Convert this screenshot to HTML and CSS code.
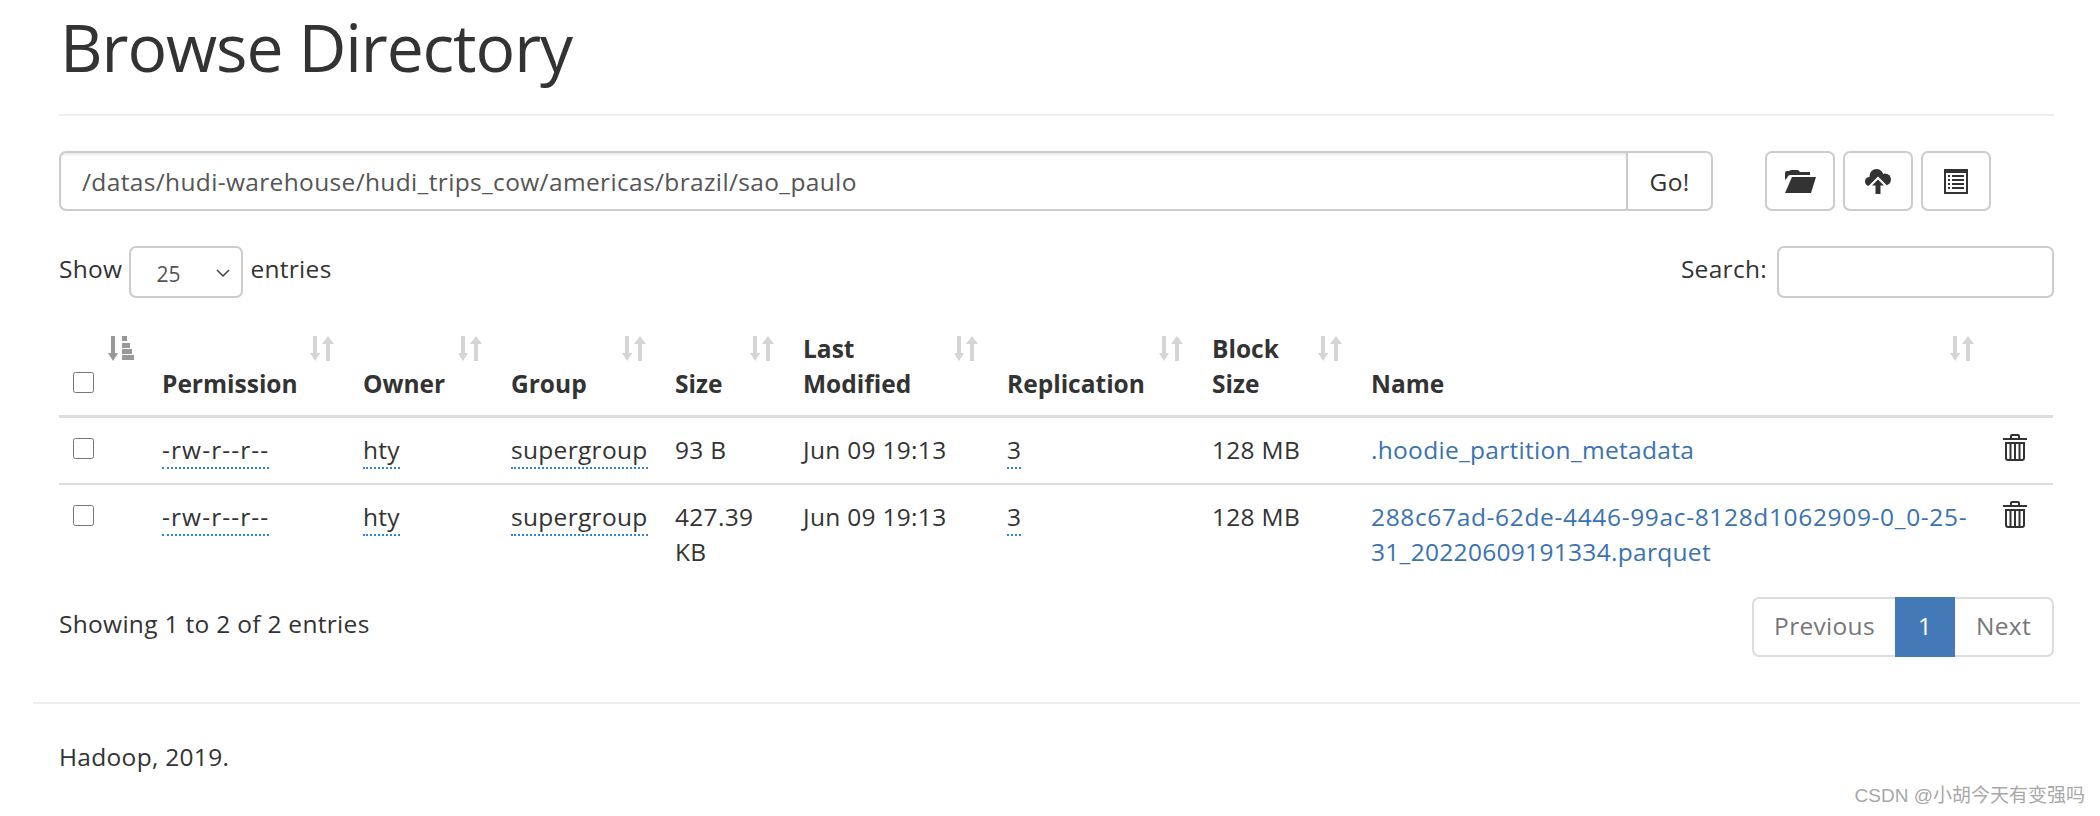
FILE: index.html
```html
<!DOCTYPE html>
<html lang="en">
<head>
<meta charset="utf-8">
<title>Browsing HDFS</title>
<link rel="stylesheet" href="styles.css">
</head>
<body>
<svg class="defs" aria-hidden="true">
  <symbol id="sort" viewBox="0 0 24 25"><path d="M3 0h4v17h3l-5 8-5-8h3zM16 25h4V8h4l-6-8-6 8h4z"/></symbol>
  <symbol id="sort-attr" viewBox="0 0 26 25"><path d="M3 0h4v17h3l-5 8-5-8h3zM14 0h5v5h-5zM14 7h8v5h-8zM14 13h10v5H14zM14 19h12v5H14z"/></symbol>
  <symbol id="trash" viewBox="0 0 24 27"><path fill-rule="evenodd" d="M7 4V2q0-2 2-2h6q2 0 2 2v2h7v2H0V4zM9 2v2h6V2zM2 8h20v16q0 3-3 3H5q-3 0-3-3zM4 10v14q0 1 1 1h14q1 0 1-1V10zM6.500 10h2v15h-2zM11 10h2v15h-2zM15.500 10h2v15h-2z"/></symbol>
</svg>
<div class="container">
  <main class="main">
    <header class="page-header"><h1>Browse Directory</h1></header>
    <div class="toolbar">
      <div class="input-group">
        <input class="path-input" type="text" value="/datas/hudi-warehouse/hudi_trips_cow/americas/brazil/sao_paulo">
        <button class="btn btn-go" type="button">Go!</button>
      </div>
      <div class="btn-row">
        <button class="btn btn-icon" type="button" aria-label="Create directory">
          <svg class="ico ico-folder" viewBox="0 0 31 23"><path d="M0 10V3q0-2 2-2h2q1-1 3-1h5q2 0 3 2h10v3H5q-2 0-3 3zM7 7h24l-5 16H0z"/></svg>
        </button>
        <button class="btn btn-icon" type="button" aria-label="Upload files">
          <svg class="ico ico-cloud" viewBox="0 0 26 25">
            <circle cx="4.500" cy="12.500" r="4.500"/><circle cx="11.500" cy="7" r="7"/><circle cx="20" cy="10.500" r="6"/>
            <path class="ico-cut" d="M13 7.500 24 18.500V25H2v-6.500z"/>
            <path d="M13 10.500 19 16.500H15.500V25h-5V16.500H7z"/>
          </svg>
        </button>
        <button class="btn btn-icon" type="button" aria-label="Cut">
          <svg class="ico ico-list" viewBox="0 0 24 25"><path fill-rule="evenodd" d="M0 0h24v25H0zM2 4v19h20V4zM4 6h2v2H4zM8 6h12v2H8zM4 10h2v2H4zM8 10h12v2H8zM4 14h2v2H4zM8 14h12v2H8zM4 18h2v2H4zM8 18h12v2H8z"/></svg>
        </button>
      </div>
    </div>

    <div class="table-top">
      <label class="length"><span class="label-text">Show</span>
        <span class="select-wrap">
          <select class="length-select"><option>25</option></select>
          <svg class="chevron" viewBox="0 0 14 8"><path d="M1 1l6 6 6-6"/></svg>
        </span>
        <span class="label-text">entries</span></label>
      <label class="search"><span class="label-text">Search:</span><input class="search-input" type="search"></label>
    </div>

    <table class="files">
      <colgroup>
        <col class="c0"><col class="c1"><col class="c2"><col class="c3"><col class="c4"><col class="c5"><col class="c6"><col class="c7"><col class="c8"><col class="c9">
      </colgroup>
      <thead>
        <tr>
          <th><input class="check" type="checkbox"><svg class="sort sort-active"><use href="#sort-attr"/></svg></th>
          <th>Permission<svg class="sort"><use href="#sort"/></svg></th>
          <th>Owner<svg class="sort"><use href="#sort"/></svg></th>
          <th>Group<svg class="sort"><use href="#sort"/></svg></th>
          <th>Size<svg class="sort"><use href="#sort"/></svg></th>
          <th>Last<br>Modified<svg class="sort"><use href="#sort"/></svg></th>
          <th>Replication<svg class="sort"><use href="#sort"/></svg></th>
          <th>Block<br>Size<svg class="sort"><use href="#sort"/></svg></th>
          <th>Name<svg class="sort"><use href="#sort"/></svg></th>
          <th></th>
        </tr>
      </thead>
      <tbody>
        <tr>
          <td><input class="check" type="checkbox"></td>
          <td><abbr class="tip perm">-rw-r--r--</abbr></td>
          <td><abbr class="tip">hty</abbr></td>
          <td><abbr class="tip">supergroup</abbr></td>
          <td>93 B</td>
          <td>Jun 09 19:13</td>
          <td><abbr class="tip">3</abbr></td>
          <td>128 MB</td>
          <td><a class="link" href="#">.hoodie_partition_metadata</a></td>
          <td><svg class="trash"><use href="#trash"/></svg></td>
        </tr>
        <tr>
          <td><input class="check" type="checkbox"></td>
          <td><abbr class="tip perm">-rw-r--r--</abbr></td>
          <td><abbr class="tip">hty</abbr></td>
          <td><abbr class="tip">supergroup</abbr></td>
          <td>427.39 KB</td>
          <td>Jun 09 19:13</td>
          <td><abbr class="tip">3</abbr></td>
          <td>128 MB</td>
          <td><a class="link" href="#"><span class="link-wide">288c67ad-62de-4446-99ac-8128d1062909-0_0-25-</span>31_20220609191334.parquet</a></td>
          <td><svg class="trash"><use href="#trash"/></svg></td>
        </tr>
      </tbody>
    </table>

    <div class="table-bottom">
      <div class="info">Showing 1 to 2 of 2 entries</div>
      <nav class="pagination">
        <a class="page page-first" href="#">Previous</a>
        <a class="page page-active" href="#">1</a>
        <a class="page page-last" href="#">Next</a>
      </nav>
    </div>
  </main>
  <hr class="rule">
  <footer class="footer">Hadoop, 2019.</footer>
</div>
<div class="watermark">CSDN @小胡今天有变强吗</div>
</body>
</html>
```

FILE: styles.css
```css
* { box-sizing: border-box; }
html, body { margin: 0; padding: 0; height: 816px; overflow: hidden; }
body {
  position: relative;
  background: #fff;
  color: #333;
  font-family: "Open Sans", "Noto Sans", sans-serif;
  font-size: 24.5px;
  line-height: 35px;
  letter-spacing: 0.3px;
}
.defs { position: absolute; width: 0; height: 0; }
.container { margin-left: 33px; width: 2047px; }
.main { padding: 0 26px; }

.page-header { height: 116px; border-bottom: 2px solid #eee; }
h1 { margin: 0; padding: 10px 0 0 1px; font-size: 66px; font-weight: 400; line-height: 72px; letter-spacing: -1.100px; }

.toolbar { display: flex; margin-top: 35px; }
.input-group { display: flex; width: 1654px; height: 60px; }
.path-input {
  flex: 1; min-width: 0; padding: 0 21px; border: 2px solid #ccc; border-right: 0;
  border-radius: 7px 0 0 7px; font: inherit; letter-spacing: 0.35px; color: #555;
  box-shadow: inset 0 2px 2px rgba(0,0,0,.075); outline: 0;
}
.btn {
  background: #fff; border: 2px solid #ccc; border-radius: 7px; color: #333;
  font: inherit; letter-spacing: inherit; display: flex; align-items: center; justify-content: center; padding: 0;
}
.btn-go { width: 87px; border-radius: 0 7px 7px 0; }
.btn-row { display: flex; gap: 8px; margin-left: 52px; }
.btn-icon { width: 70px; height: 60px; }
.ico { fill: #333; display: block; }
.ico-folder { width: 31px; height: 23px; }
.ico-cloud { width: 26px; height: 25px; }
.ico-cut { fill: #fff; }
.ico-list { width: 24px; height: 25px; }

.table-top { display: flex; justify-content: space-between; align-items: center; margin-top: 35px; height: 52px; }
.length, .search { display: flex; align-items: center; }
.label-text { margin-top: -7px; }
.select-wrap { position: relative; display: block; margin: 0 7px 0 7px; }
.length-select {
  display: block; appearance: none; width: 114px; height: 52px; padding: 5px 14px 0 25px; border: 2px solid #ccc; border-radius: 7px;
  background: #fff; color: #555; font: inherit; font-size: 21px; letter-spacing: 0;
}
.chevron { position: absolute; right: 13px; top: 23px; width: 14px; height: 8px; fill: none; stroke: #444; stroke-width: 1.500; pointer-events: none; }
.search-input { width: 277px; height: 52px; margin-left: 10px; border: 2px solid #ccc; border-radius: 7px; outline: 0; }

.files { width: 1994px; margin-top: 19px; table-layout: fixed; border-collapse: collapse; letter-spacing: 0.3px; }
.c0 { width: 89px; } .c1 { width: 201px; } .c2 { width: 148px; } .c3 { width: 164px; } .c4 { width: 128px; }
.c5 { width: 204px; } .c6 { width: 205px; } .c7 { width: 159px; } .c8 { width: 632px; } .c9 { width: 64px; }
th {
  position: relative; padding: 14px; text-align: left; vertical-align: bottom;
  border-bottom: 3.500px solid #ddd; font-weight: 700; letter-spacing: 0;
}
td { padding: 14px 14px 16px; vertical-align: top; border-top: 0; }
tr + tr td { padding-top: 14px; padding-bottom: 15px; border-top: 2px solid #ddd; }
.check { display: block; width: 21px; height: 21px; margin: 6px 0 0; }
th .check { margin-bottom: 8px; }
.sort { position: absolute; top: 19px; right: 15px; width: 24px; height: 25px; fill: #333; opacity: .2; }
.sort-active { width: 26px; opacity: .5; right: 14px; }
.tip { text-decoration: none; border-bottom: 2px dotted #2f86d6; padding-bottom: 1px; }
.perm { letter-spacing: 1.100px; }
.link { color: #3a72b3; text-decoration: none; overflow-wrap: anywhere; }
.link-wide { letter-spacing: 0.65px; }
.trash { display: block; width: 24px; height: 27px; fill: #333; margin: 2px 0 0; }

.table-bottom { display: flex; justify-content: space-between; align-items: flex-start; margin-top: 13px; }
.info { padding-top: 9px; }
.pagination { display: flex; height: 60px; }
.page { display: flex; align-items: center; justify-content: center; background: #fff; border: 2px solid #ddd; color: #777; text-decoration: none; padding-bottom: 3px; }
.page-first { width: 143px; border-radius: 7px 0 0 7px; border-right: 0; }
.page-active { width: 60px; background: #4479b8; border-color: #4479b8; color: #fff; }
.page-last { width: 99px; border-radius: 0 7px 7px 0; border-left: 0; }

.rule { margin: 45px 0 0; border: 0; border-top: 2px solid #eee; }
.footer { padding: 35px 26px 0; }

.watermark {
  position: absolute; right: 15px; bottom: 8px; color: #a8a8a8;
  font-family: "Liberation Sans", "Noto Sans CJK SC", sans-serif; font-size: 19px; line-height: 24px; letter-spacing: 0;
}
```
